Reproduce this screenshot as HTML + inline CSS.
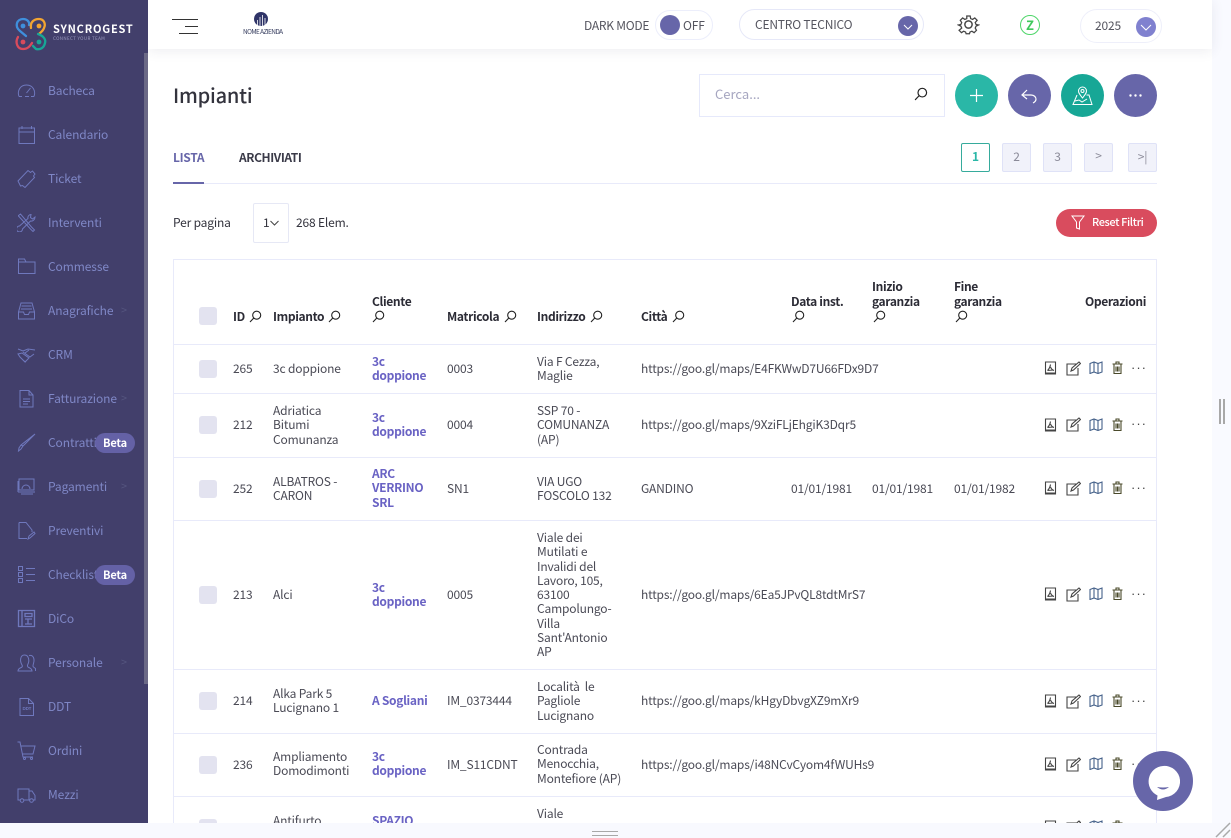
<!DOCTYPE html>
<html lang="it"><head><meta charset="utf-8"><title>Impianti</title>
<style>
html,body{margin:0;padding:0;width:1231px;height:838px;overflow:hidden;background:#f8f9fe}
body{position:relative;font-family:"Noto Sans CJK JP","Liberation Sans",sans-serif;font-size:12px;letter-spacing:-.17px;color:#4a4a55}
div,span,svg{position:absolute}
.t{white-space:nowrap;line-height:14.3px}
.side{left:0;top:0;width:148px;height:823px;background:#423f6b}
.m{left:48px;color:#7f87c6;font-size:12px;letter-spacing:-.1px;line-height:16px;white-space:nowrap;margin-top:1px}
.i{left:17px;width:19px;height:19px;fill:none;stroke:#6f78bd;stroke-width:1}
.ar{left:121px;color:#55557f;font-size:11px;line-height:14px}
.beta{left:95px;width:40px;height:20px;border-radius:10px;background:#6461a6;color:#fff;font-size:11px;font-weight:700;text-align:center;line-height:20px}
.b{font-weight:700;color:#2b2b35;letter-spacing:-.35px}
.h{margin-top:1px}
.l{font-weight:700;color:#6a63c4;letter-spacing:-.3px}
.hl{left:173px;width:984px;height:1px;background:#e8eafa}
.cb{left:199px;width:18px;height:18px;border-radius:3px;background:#e3e3f0}
.s{width:13px;height:13px;fill:none;stroke:#222;stroke-width:1.1}
.op{width:13px;height:14px;fill:none;stroke:#444;stroke-width:1.1}
.d{font-family:"Liberation Sans",sans-serif;font-size:13px;letter-spacing:1px;color:#444;left:1131px}
.pg{top:143px;width:29px;height:29px;box-sizing:border-box;border:1px solid #dfe2f7;border-radius:2px;background:#f1f2fa;color:#8a8a98;text-align:center;line-height:26px;font-size:12px}
.c{top:74px;width:43px;height:43px;border-radius:50%}
</style></head><body>
<svg width="0" height="0" style="left:0;top:0"><defs>
<symbol id="s" viewBox="0 0 13 13"><circle cx="7.7" cy="5.2" r="4"/><path d="M4.8 8 1 12"/></symbol>
<symbol id="pdf" viewBox="0 0 13 14"><path d="M1.500 1h10v12h-10z"/><path d="M1.500 12.500h10" stroke-width="2"/><path d="M6.500 3.500c-.3 2-1 4-3 6M6.500 6c.6 1.500 1.500 3 3.500 3.500M3.500 9.500l6-.5"/></symbol>
<symbol id="ed" viewBox="0 0 15 15"><path d="M10 3H1v11h11V7"/><path d="M5 10l1-3 7-6 1.500 1.500-7 6.500z"/></symbol>
<symbol id="map" viewBox="0 0 14 13"><path d="M1 2.500 5 1l4 1.500L13 1v10l-4 1.500L5 11l-4 1.500z"/><path d="M5 1v10M9 2.500v10"/></symbol>
<symbol id="tr" viewBox="0 0 11 13"><path d="M.5 3h10M2 3v9.500h7V3M4 3V1h3v2M4 5.500v5M5.500 5.500v5M7 5.500v5"/></symbol>
</defs></svg>

<div style="left:148px;top:0;width:1064px;height:823px;background:#fff"></div>
<div style="left:1212px;top:0;width:19px;height:823px;background:#f9faff"></div>
<div style="left:148px;top:0;width:1064px;height:49px;background:#fff;box-shadow:0 2px 12px rgba(60,60,90,.09)"></div>

<!-- Sidebar -->
<div class="side"></div>
<div style="left:144px;top:53px;width:4px;height:631px;background:#6b6986"></div>
<svg style="left:0;top:0" width="50" height="60" viewBox="0 0 50 60" fill="none" stroke-width="2.300" stroke-linecap="round">
<path d="M26 36 20 31C14 26 17 19 23 19 27 19 30 22 29 25" stroke="#3f8fdc"/><circle cx="23" cy="26" r="2.400" fill="#3f8fdc" stroke="none"/>
<path d="M31 28C30 22 34 19 39 19 44 19 46 24 44 28 43 31 41 32 39 34" stroke="#f2a431"/><circle cx="39" cy="26" r="2.400" fill="#f2a431" stroke="none"/>
<path d="M18 37C15 42 17 49 23 49 28 49 30 46 32 43" stroke="#d94b5c"/><circle cx="23" cy="42" r="2.400" fill="#d94b5c" stroke="none"/>
<path d="M38 34C44 36 46 40 45 43 44 48 40 50 36 49L33 46" stroke="#17a796"/><circle cx="39" cy="42" r="2.400" fill="#17a796" stroke="none"/>
</svg>
<span class="t" style="left:53px;top:22px;color:#fff;font-weight:700;font-size:11px;letter-spacing:.8px">SYNCROGEST</span>
<span class="t" style="left:53px;top:32px;color:#9d9cc0;font-size:4.500px;letter-spacing:.35px">CONNECT YOUR TEAM</span>

<svg class="i" style="top:81px" viewBox="0 0 19 19"><path d="M2 15.500C0 10 3 4 9.500 4S19 10 17 15.500M2 15.500h3M14 15.500h3M8 15.500h4M9.500 12l4-5"/></svg><span class="m" style="top:82px">Bacheca</span>
<svg class="i" style="top:125px" viewBox="0 0 19 19"><path d="M2 3h15.500v15.500H2zM2 7h15.500M5 1v3M14.500 1v3"/></svg><span class="m" style="top:126px">Calendario</span>
<svg class="i" style="top:169px" viewBox="0 0 19 19"><path d="M1 12 11 1.500l2.500 2 2-1.500 2.500 3-1.500 2 1 1.500L8 18.500 5.500 16.500 3.500 17z"/></svg><span class="m" style="top:170px">Ticket</span>
<svg class="i" style="top:213px" viewBox="0 0 19 19"><path d="M1.500 2.500 3.500 1l11 13 3 3-1.500 1.500-3-3L1.500 3zM14 1.500c-2 0-3.500 2-3 4L2.500 13a3 3 0 1 0 3 3l8-8c2.500.5 4.500-1.500 4.500-4L15.500 6 13.500 4.500z"/></svg><span class="m" style="top:214px">Interventi</span>
<svg class="i" style="top:257px" viewBox="0 0 19 19"><path d="M1.500 16.500V2h6l1.500 3h9v11.500zM1.500 5H9"/></svg><span class="m" style="top:258px">Commesse</span>
<svg class="i" style="top:301px" viewBox="0 0 19 19"><path d="M1.500 11 4 2h11l2.500 9v7h-16zM1.500 11h5l1 2.500h4l1-2.500h5M4.500 5h10M4 8h11"/></svg><span class="m" style="top:302px">Anagrafiche</span><span class="ar" style="top:303px">&gt;</span>
<svg class="i" style="top:345px" viewBox="0 0 19 19"><path d="M1 4l5 2 5-2 7 1M1 9l4-1 7 5-4 4-5-5zM6 7l7 5 4-3M7 16l2 1M12 5l-4 3"/></svg><span class="m" style="top:346px">CRM</span>
<svg class="i" style="top:389px" viewBox="0 0 19 19"><path d="M3 1.500h9l4 4.500v12H3zM12 1.500V6h4M6 10h7M6 12.500h7M6 15h5"/></svg><span class="m" style="top:390px">Fatturazione</span><span class="ar" style="top:391px">&gt;</span>
<svg class="i" style="top:433px" viewBox="0 0 19 19"><path d="M18 1 6 13l-2 3-2.500 2L2 15l2-3zM4 12l2 1"/></svg><span class="m" style="top:434px">Contratti</span><div class="beta" style="top:433px">Beta</div>
<svg class="i" style="top:477px" viewBox="0 0 19 19"><path d="M2 2h15v11H2zM1 15h17M4 17h12M5 12a4 4 0 0 1 8 0M1 4v11"/></svg><span class="m" style="top:478px">Pagamenti</span><span class="ar" style="top:479px">&gt;</span>
<svg class="i" style="top:521px" viewBox="0 0 19 19"><path d="M2 1.500h7l6 7.500v2M2 1.500v16h8M9 1.500 15 9M11 18l1-3 5-4 1 1.500-5 4.500z"/></svg><span class="m" style="top:522px">Preventivi</span>
<svg class="i" style="top:565px" viewBox="0 0 19 19"><path d="M1.500 1.500h4v4h-4zM1.500 7.500h4v4h-4zM1.500 13.500h4v4h-4zM9 3.500h9M9 9.500h9M9 15.500h9"/></svg><span class="m" style="top:566px">Checklist</span><div class="beta" style="top:565px">Beta</div>
<svg class="i" style="top:609px;stroke-width:1.300" viewBox="0 0 19 19"><path d="M1.500 1.500h16v16h-16zM5 1.500v16M8 4.500h7v3H8zM8 10h7M11 10v5M8 15h7"/></svg><span class="m" style="top:610px">DiCo</span>
<svg class="i" style="top:653px" viewBox="0 0 19 19"><path d="M1 18c0-3 3-3 4-4 1-1 0-2-.5-3C3 8 3 2 7.500 2s5 6 3.500 9c-.5 1-1 2 0 3s4 1 4 4zM12 2.500c4-1 6 3 4.500 8-.5 2-1 3 0 3.500l2 1.500v2.500"/></svg><span class="m" style="top:654px">Personale</span><span class="ar" style="top:655px">&gt;</span>
<svg class="i" style="top:697px" viewBox="0 0 19 19"><path d="M3 1.500h8.500l5 5v12H3zM11.500 1.500v5h5"/><text x="5.500" y="13" font-size="4.500" fill="#6f78bd" stroke="none" font-family="Liberation Sans" font-weight="700">DDT</text></svg><span class="m" style="top:698px">DDT</span>
<svg class="i" style="top:741px" viewBox="0 0 19 19"><path d="M.5 1H3l3 15h10M4 5h14l-2 8H5.500"/><circle cx="7.500" cy="17.500" r="1"/><circle cx="14.500" cy="17.500" r="1"/></svg><span class="m" style="top:742px">Ordini</span>
<svg class="i" style="top:785px" viewBox="0 0 19 19"><path d="M3 15H1V4h11v11H7M12 6h3l3 4.500V15h-2M12 15h1"/><circle cx="5" cy="15.500" r="1.800"/><circle cx="14.500" cy="15.500" r="1.800"/></svg><span class="m" style="top:786px">Mezzi</span>

<!-- Topbar -->
<div style="left:172px;top:19px;width:26px;height:1px;background:#333"></div>
<div style="left:185px;top:26px;width:13px;height:1px;background:#333"></div>
<div style="left:179px;top:33px;width:19px;height:1px;background:#333"></div>
<svg style="left:254px;top:12px" width="14" height="14" viewBox="0 0 14 14"><circle cx="7" cy="7" r="7" fill="#2f3468"/><path d="M3.500 14V8M6 14V5M8.500 14V3M11 14V6" stroke="#fff" stroke-width=".8"/></svg>
<span class="t" style="left:243px;top:24px;font-size:6.500px;letter-spacing:-.6px;color:#333a5c">NOME AZIENDA</span>

<span class="t" style="left:584px;top:19px;font-size:12px;letter-spacing:-.25px;color:#55555f">DARK MODE</span>
<div style="left:655px;top:10px;width:58px;height:30px;box-sizing:border-box;border:1px solid #eceefb;border-radius:15px"></div>
<div style="left:660px;top:15px;width:20px;height:20px;border-radius:50%;background:#6766a9"></div>
<span class="t" style="left:683px;top:19px;font-size:12px;color:#55555f">OFF</span>

<div style="left:739px;top:9px;width:185px;height:31px;box-sizing:border-box;border:1px solid #e6e8f8;border-radius:16px"></div>
<span class="t" style="left:755px;top:18px;font-size:12px;letter-spacing:-.2px;color:#55555f">CENTRO TECNICO</span>
<div style="left:898px;top:16px;width:20px;height:20px;border-radius:50%;background:#6766a9"></div>
<svg style="left:898px;top:16px" width="20" height="20" fill="none" stroke="#fff"><path d="M6 9l4 4 4-4"/></svg>

<svg style="left:957px;top:13px" width="23" height="23" viewBox="0 0 24 24" fill="none" stroke="#444" stroke-width="1.500"><circle cx="12" cy="12" r="3.800"/><path d="M10 2h4l.6 3 2.300 1 2.600-1.700 2.800 2.800L20 9.700l1 2.300 3 .6v0l-3 1.400-1 2.300 1.500 2.600-2.800 2.800-2.600-1.700-2.300 1-.6 2h-4l-.6-2-2.300-1-2.600 1.700-2.800-2.800L4 16.300 3 14l-3-1.400v0l3-.6 1-2.300-1.700-2.600 2.800-2.800 2.600 1.700 2.300-1z" transform="translate(1.400 1.400) scale(.88)"/></svg>
<div style="left:1020px;top:15px;width:20px;height:20px;box-sizing:border-box;border:1.500px solid #4fd66a;border-radius:50%;color:#3fc85c;font-weight:700;font-size:13px;line-height:17px;text-align:center;letter-spacing:0">Z</div>

<div style="left:1080px;top:9px;width:82px;height:34px;box-sizing:border-box;border:1px solid #eeeffa;border-radius:17px"></div>
<span class="t" style="left:1095px;top:19px;font-size:12px;color:#55555f">2025</span>
<div style="left:1136px;top:17px;width:20px;height:20px;border-radius:50%;background:#8081cf"></div>
<svg style="left:1136px;top:17px" width="20" height="20" fill="none" stroke="#fff"><path d="M5 8l5 5 5-5"/></svg>

<!-- Title row -->
<span class="t" style="left:173px;top:83px;font-size:20px;line-height:24px;letter-spacing:-.2px;font-weight:500;color:#33333d">Impianti</span>
<div style="left:699px;top:74px;width:246px;height:43px;box-sizing:border-box;border:1px solid #e6e9fb"></div>
<span class="t" style="left:715px;top:87px;font-size:13px;letter-spacing:0;color:#a6a6c0">Cerca...</span>
<svg class="s" style="left:914px;top:87px;width:14px;height:14px"><use href="#s"/></svg>

<div class="c" style="left:955px;background:#2ab7a7"></div>
<svg style="left:955px;top:74px" width="43" height="43" fill="none" stroke="#fff" stroke-width="1.200"><path d="M21.500 15v13M15 21.500h13"/></svg>
<div class="c" style="left:1008px;background:#6766a9"></div>
<svg style="left:1008px;top:74px" width="43" height="43" fill="none" stroke="#fff" stroke-width="1.200"><path d="M19 16l-5 5 5 4M14 21h9c3 0 5 2 5 4s-1 3-3 4"/></svg>
<div class="c" style="left:1061px;background:#17a796"></div>
<svg style="left:1061px;top:74px" width="43" height="43" fill="none" stroke="#fff" stroke-width="1"><path d="M21.500 24c-3-4-4-5-4-7a4 4 0 0 1 8 0c0 2-1 3-4 7z"/><circle cx="21.500" cy="17" r="1.500"/><path d="M16 21l-4 9.500h19l-3-9.500h-2.500M14 27l4-1 3 2 5-3"/></svg>
<div class="c" style="left:1114px;background:#6766a9"></div>
<svg style="left:1114px;top:74px" width="43" height="43" fill="#fff"><circle cx="16.500" cy="21.500" r="1.200"/><circle cx="21.500" cy="21.500" r="1.200"/><circle cx="26.500" cy="21.500" r="1.200"/></svg>

<!-- Tabs -->
<span class="t b" style="left:173px;top:151px;font-size:12px;color:#6766a9;letter-spacing:-.3px">LISTA</span>
<span class="t b" style="left:239px;top:151px;font-size:12px;color:#3a3a48;letter-spacing:-.4px">ARCHIVIATI</span>
<div class="hl" style="top:183px"></div>
<div style="left:173px;top:182px;width:31px;height:2px;background:#6766a9"></div>
<div class="pg" style="left:961px;background:#fff;border-color:#36ab9c;color:#2ab7a7;font-weight:700">1</div>
<div class="pg" style="left:1002px">2</div>
<div class="pg" style="left:1043px">3</div>
<div class="pg" style="left:1084px;line-height:24px">&gt;</div>
<div class="pg" style="left:1128px">&gt;|</div>

<span class="t" style="left:173px;top:216px;color:#33333d">Per pagina</span>
<div style="left:253px;top:203px;width:36px;height:40px;box-sizing:border-box;border:1px solid #e6e8f5;border-radius:2px"></div>
<span class="t" style="left:263px;top:216px;color:#33333d">1</span>
<svg style="left:270px;top:220px" width="10" height="6" fill="none" stroke="#444"><path d="M.5 1l4 4 4-4"/></svg>
<span class="t" style="left:296px;top:216px;color:#33333d">268 Elem.</span>
<div style="left:1056px;top:209px;width:101px;height:28px;border-radius:14px;background:#d94c5e"></div>
<svg style="left:1071px;top:215px" width="14" height="15" fill="none" stroke="#fff"><path d="M1 1h12L8.500 7v7l-3-1V7z"/></svg>
<span class="t" style="left:1092px;top:215px;color:#fff;font-size:11px;letter-spacing:-.4px;font-weight:500">Reset Filtri</span>

<!-- Table frame -->
<div style="left:173px;top:259px;width:984px;height:564px;box-sizing:border-box;border:1px solid #e8eafa;border-bottom:0"></div>
<div class="hl" style="top:344px"></div><div class="hl" style="top:393px"></div><div class="hl" style="top:457px"></div><div class="hl" style="top:520px"></div><div class="hl" style="top:669px"></div><div class="hl" style="top:733px"></div><div class="hl" style="top:796px"></div>

<!-- Header -->
<div class="cb" style="top:307px"></div>
<span class="t b h" style="left:233px;top:309px">ID</span><svg class="s" style="left:249px;top:310px"><use href="#s"/></svg>
<span class="t b h" style="left:273px;top:309px">Impianto</span><svg class="s" style="left:328px;top:310px"><use href="#s"/></svg>
<span class="t b h" style="left:372px;top:294px">Cliente</span><svg class="s" style="left:372px;top:310px"><use href="#s"/></svg>
<span class="t b h" style="left:447px;top:309px">Matricola</span><svg class="s" style="left:504px;top:310px"><use href="#s"/></svg>
<span class="t b h" style="left:537px;top:309px">Indirizzo</span><svg class="s" style="left:590px;top:310px"><use href="#s"/></svg>
<span class="t b h" style="left:641px;top:309px">Città</span><svg class="s" style="left:672px;top:310px"><use href="#s"/></svg>
<span class="t b h" style="left:791px;top:294px">Data inst.</span><svg class="s" style="left:792px;top:310px"><use href="#s"/></svg>
<span class="t b" style="left:872px;top:279px;line-height:15px">Inizio<br>garanzia</span><svg class="s" style="left:873px;top:310px"><use href="#s"/></svg>
<span class="t b" style="left:954px;top:279px;line-height:15px">Fine<br>garanzia</span><svg class="s" style="left:955px;top:310px"><use href="#s"/></svg>
<span class="t b h" style="left:1085px;top:294px">Operazioni</span>

<!-- Row 1 -->
<div class="cb" style="top:360px"></div>
<span class="t" style="left:233px;top:362px">265</span>
<span class="t" style="left:273px;top:362px">3c doppione</span>
<span class="t l" style="left:372px;top:355px">3c<br>doppione</span>
<span class="t" style="left:447px;top:362px">0003</span>
<span class="t" style="left:537px;top:355px">Via F Cezza,<br>Maglie</span>
<span class="t" style="left:641px;top:362px">https://goo.gl/maps/E4FKWwD7U66FDx9D7</span>
<svg class="op" style="left:1044px;top:361px"><use href="#pdf"/></svg><svg class="op" style="left:1066px;top:361px;width:15px;height:15px"><use href="#ed"/></svg><svg class="op" style="left:1089px;top:361px;width:14px;height:13px;stroke:#45618a"><use href="#map"/></svg><svg class="op" style="left:1112px;top:361px;width:11px;height:13px;stroke:#4a4a2a"><use href="#tr"/></svg><span class="t d" style="top:361px">···</span>

<!-- Row 2 -->
<div class="cb" style="top:416px"></div>
<span class="t" style="left:233px;top:418px">212</span>
<span class="t" style="left:273px;top:404px">Adriatica<br>Bitumi<br>Comunanza</span>
<span class="t l" style="left:372px;top:411px">3c<br>doppione</span>
<span class="t" style="left:447px;top:418px">0004</span>
<span class="t" style="left:537px;top:404px">SSP 70 -<br>COMUNANZA<br>(AP)</span>
<span class="t" style="left:641px;top:418px">https://goo.gl/maps/9XziFLjEhgiK3Dqr5</span>
<svg class="op" style="left:1044px;top:418px"><use href="#pdf"/></svg><svg class="op" style="left:1066px;top:417px;width:15px;height:15px"><use href="#ed"/></svg><svg class="op" style="left:1089px;top:418px;width:14px;height:13px;stroke:#45618a"><use href="#map"/></svg><svg class="op" style="left:1112px;top:418px;width:11px;height:13px;stroke:#4a4a2a"><use href="#tr"/></svg><span class="t d" style="top:417px">···</span>

<!-- Row 3 -->
<div class="cb" style="top:480px"></div>
<span class="t" style="left:233px;top:482px">252</span>
<span class="t" style="left:273px;top:475px">ALBATROS -<br>CARON</span>
<span class="t l" style="left:372px;top:467px">ARC<br>VERRINO<br>SRL</span>
<span class="t" style="left:447px;top:482px">SN1</span>
<span class="t" style="left:537px;top:475px">VIA UGO<br>FOSCOLO 132</span>
<span class="t" style="left:641px;top:482px">GANDINO</span>
<span class="t" style="left:791px;top:482px">01/01/1981</span>
<span class="t" style="left:872px;top:482px">01/01/1981</span>
<span class="t" style="left:954px;top:482px">01/01/1982</span>
<svg class="op" style="left:1044px;top:481px"><use href="#pdf"/></svg><svg class="op" style="left:1066px;top:481px;width:15px;height:15px"><use href="#ed"/></svg><svg class="op" style="left:1089px;top:481px;width:14px;height:13px;stroke:#45618a"><use href="#map"/></svg><svg class="op" style="left:1112px;top:481px;width:11px;height:13px;stroke:#4a4a2a"><use href="#tr"/></svg><span class="t d" style="top:481px">···</span>

<!-- Row 4 -->
<div class="cb" style="top:586px"></div>
<span class="t" style="left:233px;top:588px">213</span>
<span class="t" style="left:273px;top:588px">Alci</span>
<span class="t l" style="left:372px;top:581px">3c<br>doppione</span>
<span class="t" style="left:447px;top:588px">0005</span>
<span class="t" style="left:537px;top:531px">Viale dei<br>Mutilati e<br>Invalidi del<br>Lavoro, 105,<br>63100<br>Campolungo-<br>Villa<br>Sant'Antonio<br>AP</span>
<span class="t" style="left:641px;top:588px">https://goo.gl/maps/6Ea5JPvQL8tdtMrS7</span>
<svg class="op" style="left:1044px;top:587px"><use href="#pdf"/></svg><svg class="op" style="left:1066px;top:587px;width:15px;height:15px"><use href="#ed"/></svg><svg class="op" style="left:1089px;top:587px;width:14px;height:13px;stroke:#45618a"><use href="#map"/></svg><svg class="op" style="left:1112px;top:587px;width:11px;height:13px;stroke:#4a4a2a"><use href="#tr"/></svg><span class="t d" style="top:587px">···</span>

<!-- Row 5 -->
<div class="cb" style="top:692px"></div>
<span class="t" style="left:233px;top:694px">214</span>
<span class="t" style="left:273px;top:687px">Alka Park 5<br>Lucignano 1</span>
<span class="t l" style="left:372px;top:694px">A Sogliani</span>
<span class="t" style="left:447px;top:694px">IM_0373444</span>
<span class="t" style="left:537px;top:680px">Località&nbsp; le<br>Pagliole<br>Lucignano</span>
<span class="t" style="left:641px;top:694px">https://goo.gl/maps/kHgyDbvgXZ9mXr9</span>
<svg class="op" style="left:1044px;top:694px"><use href="#pdf"/></svg><svg class="op" style="left:1066px;top:694px;width:15px;height:15px"><use href="#ed"/></svg><svg class="op" style="left:1089px;top:694px;width:14px;height:13px;stroke:#45618a"><use href="#map"/></svg><svg class="op" style="left:1112px;top:694px;width:11px;height:13px;stroke:#4a4a2a"><use href="#tr"/></svg><span class="t d" style="top:694px">···</span>

<!-- Row 6 -->
<div class="cb" style="top:756px"></div>
<span class="t" style="left:233px;top:758px">236</span>
<span class="t" style="left:273px;top:750px">Ampliamento<br>Domodimonti</span>
<span class="t l" style="left:372px;top:750px">3c<br>doppione</span>
<span class="t" style="left:447px;top:758px">IM_S11CDNT</span>
<span class="t" style="left:537px;top:743px">Contrada<br>Menocchia,<br>Montefiore (AP)</span>
<span class="t" style="left:641px;top:758px">https://goo.gl/maps/i48NCvCyom4fWUHs9</span>
<svg class="op" style="left:1044px;top:757px"><use href="#pdf"/></svg><svg class="op" style="left:1066px;top:757px;width:15px;height:15px"><use href="#ed"/></svg><svg class="op" style="left:1089px;top:757px;width:14px;height:13px;stroke:#45618a"><use href="#map"/></svg><svg class="op" style="left:1112px;top:757px;width:11px;height:13px;stroke:#4a4a2a"><use href="#tr"/></svg><span class="t d" style="top:757px">···</span>

<!-- Row 7 (cut) -->
<div style="left:149px;top:797px;width:1063px;height:26px;overflow:hidden">
<div class="cb" style="left:50px;top:22px"></div>
<span class="t" style="left:124px;top:17px">Antifurto</span>
<span class="t l" style="left:223px;top:17px">SPAZIO</span>
<span class="t" style="left:388px;top:10px">Viale</span>
<svg class="op" style="left:895px;top:23px"><use href="#pdf"/></svg><svg class="op" style="left:917px;top:23px;width:15px;height:15px"><use href="#ed"/></svg><svg class="op" style="left:940px;top:23px;width:14px;height:13px;stroke:#45618a"><use href="#map"/></svg><svg class="op" style="left:963px;top:23px;width:11px;height:13px;stroke:#4a4a2a"><use href="#tr"/></svg>
</div>

<!-- Bottom / handles -->
<div style="left:0;top:823px;width:1231px;height:15px;background:#f8f9fe"></div>
<div style="left:592px;top:831px;width:26px;height:1px;background:#a8a8a8"></div>
<div style="left:592px;top:835px;width:26px;height:1px;background:#a8a8a8"></div>
<div style="left:1219px;top:399px;width:2px;height:25px;background:#a8a8a8"></div>
<div style="left:1223px;top:399px;width:2px;height:25px;background:#a8a8a8"></div>
<svg style="left:1215px;top:822px" width="16" height="16" stroke="#aaa" stroke-width="1.500"><path d="M1 15 15 1M8 15l7-7"/></svg>

<!-- Chat -->
<div style="left:1133px;top:751px;width:60px;height:60px;border-radius:50%;background:#6766a9"></div>
<svg style="left:1133px;top:751px" width="60" height="60"><path d="M30 15a15.500 15.500 0 0 1 3 31l-9 3 .5-4.500A15.500 15.500 0 0 1 30 15z" fill="#fff"/><path d="M24 36q6 5 12 0q-6 1-12 0z" fill="#6766a9"/></svg>
</body></html>
